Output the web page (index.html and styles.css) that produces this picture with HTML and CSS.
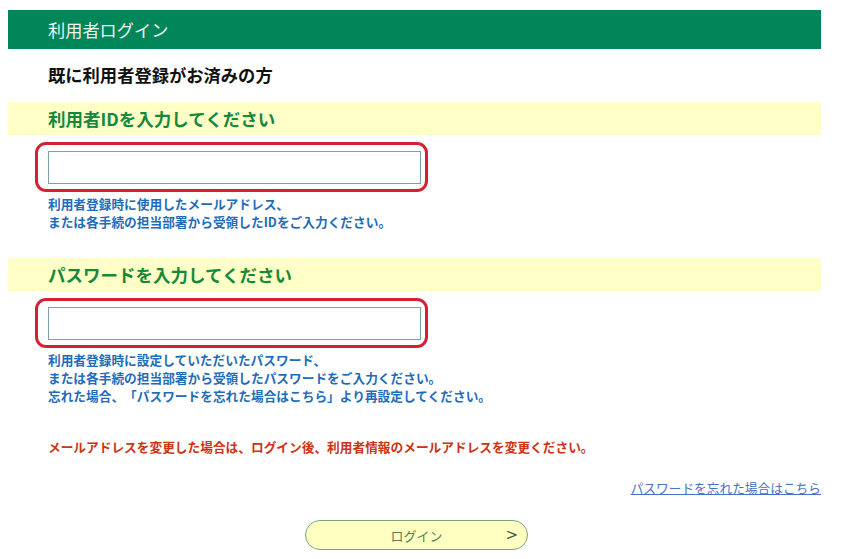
FILE: index.html
```html
<!DOCTYPE html>
<html lang="ja">
<head>
<meta charset="utf-8">
<title>利用者ログイン</title>
<link rel="stylesheet" href="styles.css">
</head>
<body>
<div class="page">
  <div class="header">利用者ログイン</div>
  <h2 class="subtitle">既に利用者登録がお済みの方</h2>

  <div class="band">利用者IDを入力してください</div>
  <div class="field"><input class="text-input" type="text"></div>
  <p class="help">利用者登録時に使用したメールアドレス、<br>または各手続の担当部署から受領したIDをご入力ください。</p>

  <div class="band band-second">パスワードを入力してください</div>
  <div class="field"><input class="text-input" type="password"></div>
  <p class="help">利用者登録時に設定していただいたパスワード、<br>または各手続の担当部署から受領したパスワードをご入力ください。<br>忘れた場合、「パスワードを忘れた場合はこちら」より再設定してください。</p>

  <p class="notice">メールアドレスを変更した場合は、ログイン後、利用者情報のメールアドレスを変更ください。</p>

  <div class="link-row"><a class="forgot" href="#">パスワードを忘れた場合はこちら</a></div>

  <div class="button-row">
    <button class="login-btn" type="button"><span class="btn-spacer"></span><span class="btn-label">ログイン</span><span class="btn-arrow">&gt;</span></button>
  </div>
</div>
</body>
</html>
```

FILE: styles.css
```css
html, body {
  margin: 0;
  padding: 0;
  background: #ffffff;
}

body {
  font-family: "Noto Sans CJK JP", "Noto Sans", sans-serif;
  text-spacing-trim: space-all;
}

.page {
  width: 813px;
  margin: 10px 0 0 8px;
}

.header {
  height: 39px;
  line-height: 39px;
  background: #008659;
  color: #eef3ef;
  font-size: 17.2px;
  padding-left: 40px;
}

.subtitle {
  margin: 14px 0 0 0;
  padding-left: 40px;
  font-size: 17.3px;
  line-height: 24px;
  font-weight: bold;
  color: #111111;
}

.band {
  margin-top: 15px;
  height: 33px;
  line-height: 33px;
  background: #ffffc8;
  color: #16883b;
  font-size: 17.5px;
  font-weight: bold;
  padding-left: 40px;
}

.band-second {
  margin-top: 27px;
}

.field {
  display: inline-block;
  margin: 7px 0 0 27px;
  border: 3px solid #d42030;
  border-radius: 11px;
  padding: 6px 4px 5px 10px;
  line-height: 0;
}

.text-input {
  box-sizing: border-box;
  width: 373px;
  height: 33px;
  border: 1px solid #7f9fa5;
  margin: 0;
  padding: 0 4px;
  background: #ffffff;
  outline: none;
}

.help {
  margin: 3px 0 0 0;
  padding-left: 40px;
  font-size: 12.7px;
  line-height: 18px;
  font-weight: bold;
  color: #1f6cba;
}

.notice {
  margin: 33px 0 0 0;
  padding-left: 40px;
  font-size: 12.7px;
  line-height: 18px;
  font-weight: bold;
  color: #cc3314;
}

.link-row {
  margin-top: 23px;
  display: flex;
  justify-content: flex-end;
  line-height: 18px;
}

.forgot {
  font-size: 12.7px;
  color: #4a6fc6;
  text-decoration: underline;
}

.button-row {
  margin-top: 23px;
  display: flex;
  justify-content: center;
  padding-left: 4px;
}

.login-btn {
  box-sizing: border-box;
  width: 223px;
  height: 30px;
  border: 1px solid #7fa27f;
  border-radius: 15px;
  background: #ffffc2;
  display: grid;
  grid-template-columns: 1fr auto 1fr;
  align-items: center;
  padding: 0 9px;
  font-family: "Noto Sans CJK JP", "Noto Sans", sans-serif;
  cursor: pointer;
}

.btn-label {
  font-size: 13px;
  color: #567c5c;
}

.btn-arrow {
  justify-self: end;
  font-family: "DejaVu Sans", sans-serif;
  font-size: 15px;
  color: #3f5a48;
}
```
